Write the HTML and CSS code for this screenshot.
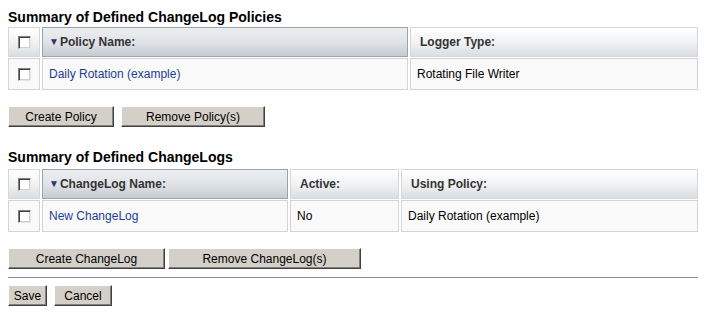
FILE: index.html
```html
<!DOCTYPE html>
<html lang="en">
<head>
    <meta charset="UTF-8">
    <meta name="viewport" content="width=device-width, initial-scale=1.0">
    <title>ChangeLog Policies</title>
    <link rel="stylesheet" href="styles.css">
</head>
<body>
    <div class="page">
        <h2 class="section-title">Summary of Defined ChangeLog Policies</h2>
        <table class="grid">
            <tr>
                <th class="col-check"><span class="check"></span></th>
                <th class="col-policy sorted"><span class="sort-arrow">&#9660;</span>Policy Name:</th>
                <th>Logger Type:</th>
            </tr>
            <tr>
                <td class="col-check"><span class="check"></span></td>
                <td><a href="#">Daily Rotation (example)</a></td>
                <td>Rotating File Writer</td>
            </tr>
        </table>

        <div class="btn-row first">
            <button class="btn w-create-policy">Create Policy</button>
            <button class="btn w-remove-policy">Remove Policy(s)</button>
        </div>

        <h2 class="section-title second">Summary of Defined ChangeLogs</h2>
        <table class="grid">
            <tr>
                <th class="col-check"><span class="check"></span></th>
                <th class="col-name sorted"><span class="sort-arrow">&#9660;</span>ChangeLog Name:</th>
                <th class="col-active">Active:</th>
                <th>Using Policy:</th>
            </tr>
            <tr>
                <td class="col-check"><span class="check"></span></td>
                <td><a href="#">New ChangeLog</a></td>
                <td>No</td>
                <td>Daily Rotation (example)</td>
            </tr>
        </table>

        <div class="btn-row tight second">
            <button class="btn w-create-log">Create ChangeLog</button>
            <button class="btn w-remove-log">Remove ChangeLog(s)</button>
        </div>

        <hr class="divider">

        <div class="btn-row">
            <button class="btn w-save">Save</button>
            <button class="btn w-cancel">Cancel</button>
        </div>
    </div>
</body>
</html>
```

FILE: styles.css
```css
body {
    margin: 0;
    font-family: "Liberation Sans", Arial, sans-serif;
    font-size: 12px;
    color: #000;
    background: #fff;
}
.page {
    padding: 0 8px;
}
.section-title {
    font-size: 14px;
    font-weight: bold;
    line-height: 16px;
    margin: 9px 0 1px;
    color: #000;
}
.section-title.second {
    margin-top: 22px;
    margin-bottom: 3px;
}
.grid {
    table-layout: fixed;
    border-collapse: separate;
    border-spacing: 2px 1px;
    width: calc(100% + 4px);
    margin: 0 -2px;
}
.grid th,
.grid td {
    box-sizing: border-box;
    text-align: left;
    white-space: nowrap;
}
.grid th {
    height: 30px;
    padding: 0 9px;
    font-weight: bold;
    color: #333;
    border: 1px solid #d3d7db;
    background: linear-gradient(#ffffff, #f1f2f4 50%, #dadee2);
}
.grid th.sorted {
    padding-left: 6px;
    border-color: #97a4ae;
    background: linear-gradient(#eceef0, #e0e3e6 50%, #c6ccd2);
}
.grid td {
    height: 32px;
    padding: 0 6px;
    border: 1px solid #d4d4d4;
    background: #f9f9f9;
}
.grid .col-check {
    width: 32px;
    padding: 0;
    text-align: center;
}
.col-policy {
    width: 366px;
}
.col-name {
    width: 246px;
}
.col-active {
    width: 109px;
}
.sort-arrow {
    font-size: 10px;
    color: #33336b;
    margin-right: 1px;
    vertical-align: 1px;
}
.check {
    display: inline-block;
    width: 13px;
    height: 13px;
    box-sizing: border-box;
    vertical-align: middle;
    background: #fff;
    border: 1px solid;
    border-color: #808080 #e6e6e6 #e6e6e6 #808080;
    box-shadow: inset 1px 1px #404040, inset -1px -1px #d4d0c8;
}
a {
    color: #1b3f92;
    text-decoration: none;
}
.btn-row {
    display: flex;
    gap: 7px;
}
.btn-row.first {
    margin-top: 15px;
}
.btn-row.second {
    margin-top: 15px;
}
.btn-row.tight {
    gap: 3px;
}
.btn {
    height: 21px;
    padding: 0;
    font-family: "Liberation Sans", Arial, sans-serif;
    font-size: 12px;
    color: #000;
    background: #d4d0c8;
    border: 1px solid;
    border-color: #ffffff #404040 #404040 #ffffff;
    box-shadow: inset -1px -1px #808080;
    cursor: pointer;
}
.w-create-policy { width: 106px; }
.w-remove-policy { width: 144px; }
.w-create-log { width: 157px; }
.w-remove-log { width: 193px; }
.w-save { width: 39px; }
.w-cancel { width: 58px; }
.divider {
    border: 0;
    border-top: 1px solid #8c8c8c;
    margin: 8px 0 7px;
}
```
